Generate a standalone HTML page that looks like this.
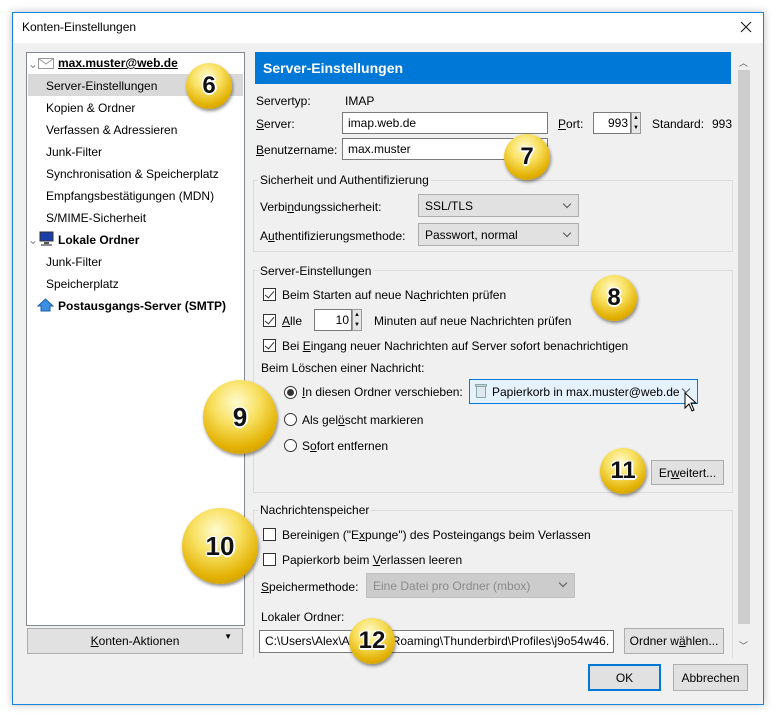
<!DOCTYPE html>
<html><head><meta charset="utf-8"><style>
*{box-sizing:border-box;margin:0;padding:0}
body{width:776px;height:716px;background:#fff;position:relative;overflow:hidden;font-family:"Liberation Sans",sans-serif;font-size:12px;color:#000}
.a{position:absolute;white-space:nowrap}
.win{position:absolute;left:12px;top:12px;width:752px;height:693px;border:1px solid #1883d7;background:#f0f0f0;box-shadow:0 0 8px rgba(0,0,0,.25)}
.inp{position:absolute;background:#fff;border:1px solid #7a7a7a;height:22px;padding:3px 5px}
.dd{position:absolute;background:#e1e1e1;border:1px solid #adadad;height:23px;padding:4px 6px}
.dd:after{content:"";position:absolute;right:8px;top:6px;width:5px;height:5px;border-right:1px solid #555;border-bottom:1px solid #555;transform:rotate(45deg)}
.btn{position:absolute;background:#e1e1e1;border:1px solid #adadad;height:25px;text-align:center;padding-top:5px}
.grp{position:absolute;border:1px solid #dcdcdc}
.cb{position:absolute;width:13px;height:13px;border:1px solid #333;background:#fff}
.cb.c:after{content:"";position:absolute;left:3px;top:0px;width:4px;height:8px;border-right:1.5px solid #333;border-bottom:1.5px solid #333;transform:rotate(40deg)}
.rb{position:absolute;width:13px;height:13px;border:1px solid #333;border-radius:50%;background:#fff}
.rb.c:after{content:"";position:absolute;left:2px;top:2px;width:7px;height:7px;border-radius:50%;background:#333}
.bd{position:absolute;border-radius:50%;background:radial-gradient(circle at 45% 30%,#fffbd0 0%,#f8e060 35%,#e2b000 70%,#b88a00 100%);box-shadow:1px 2px 3px rgba(0,0,0,.45);text-align:center;font-weight:bold;color:#111;font-family:"Liberation Sans",sans-serif;text-shadow:-1px -1px 0 #fff,1px -1px 0 #fff,-1px 1px 0 #fff,1px 1px 0 #fff,0 2px 0 #fff,2px 0 0 #fff}
u{text-decoration:underline}
</style></head><body>
<div class="win"></div>
<div class="a" style="left:13px;top:13px;width:750px;height:30px;background:#fff"></div>
<div class="a" style="left:22px;top:20px;font-size:12px">Konten-Einstellungen</div>
<svg class="a" style="left:740px;top:21px" width="12" height="12"><path d="M1 1L11 11M11 1L1 11" stroke="#222" stroke-width="1.2"/></svg>

<!-- left tree -->
<div class="a" style="left:26px;top:52px;width:219px;height:574px;background:#fff;border:1px solid #828790"></div>
<div class="a" style="left:28px;top:74px;width:215px;height:22px;background:#d9d9d9"></div>
<div class="a" style="left:28px;top:57px;color:#888">⌄</div>
<svg class="a" style="left:38px;top:58px" width="16" height="11"><rect x=".5" y=".5" width="15" height="10" fill="#fff" stroke="#999"/><path d="M.5 .5L8 6L15.5 .5" fill="none" stroke="#999"/></svg>
<div class="a" style="left:58px;top:56px;font-weight:bold;text-decoration:underline">max.muster@web.de</div>
<div class="a" style="left:46px;top:79px">Server-Einstellungen</div>
<div class="a" style="left:46px;top:101px">Kopien &amp; Ordner</div>
<div class="a" style="left:46px;top:123px">Verfassen &amp; Adressieren</div>
<div class="a" style="left:46px;top:145px">Junk-Filter</div>
<div class="a" style="left:46px;top:167px">Synchronisation &amp; Speicherplatz</div>
<div class="a" style="left:46px;top:189px">Empfangsbestätigungen (MDN)</div>
<div class="a" style="left:46px;top:211px">S/MIME-Sicherheit</div>
<div class="a" style="left:28px;top:233px;color:#888">⌄</div>
<svg class="a" style="left:39px;top:231px" width="15" height="15"><rect x="1" y="1" width="13" height="9" fill="#1a3fa8" stroke="#333"/><rect x="5" y="11" width="5" height="2" fill="#555"/><rect x="2" y="13" width="11" height="2" fill="#888"/></svg>
<div class="a" style="left:58px;top:233px;font-weight:bold">Lokale Ordner</div>
<div class="a" style="left:46px;top:255px">Junk-Filter</div>
<div class="a" style="left:46px;top:277px">Speicherplatz</div>
<svg class="a" style="left:37px;top:298px" width="17" height="14"><path d="M8.5 1L1 8H4V13H13V8H16Z" fill="#3a8fe0" stroke="#1b5fa8"/></svg>
<div class="a" style="left:58px;top:299px;font-weight:bold">Postausgangs-Server (SMTP)</div>
<div class="btn" style="left:27px;top:628px;width:216px;height:26px"><u>K</u>onten-Aktionen<span style="position:absolute;right:10px;top:3px;font-size:8px">▼</span></div>

<!-- right -->
<div class="a" style="left:255px;top:52px;width:476px;height:32px;background:#0078d7;color:#fff;font-weight:bold;font-size:14px;padding:8px 8px">Server-Einstellungen</div>
<div class="a" style="left:737px;top:55px;width:14px;height:596px;background:#f0f0f0"></div>
<div class="a" style="left:738px;top:70px;width:12px;height:554px;background:#cdcdcd"></div>
<div class="a" style="left:739px;top:56px;font-size:9px;color:#555">︿</div>
<div class="a" style="left:739px;top:639px;font-size:9px;color:#555">﹀</div>

<div class="a" style="left:256px;top:94px">Servertyp:</div>
<div class="a" style="left:345px;top:94px">IMAP</div>
<div class="a" style="left:256px;top:117px"><u>S</u>erver:</div>
<div class="inp" style="left:342px;top:112px;width:206px">imap.web.de</div>
<div class="a" style="left:558px;top:117px"><u>P</u>ort:</div>
<div class="inp" style="left:593px;top:112px;width:38px;text-align:right;padding-right:2px">993</div>
<div class="a" style="left:631px;top:112px;width:10px;height:22px;background:#e6e6e6;border:1px solid #999;font-size:6px;line-height:10px;text-align:center">▲<br>▼</div>
<div class="a" style="left:652px;top:117px">Standard:</div>
<div class="a" style="left:712px;top:117px">993</div>
<div class="a" style="left:256px;top:143px"><u>B</u>enutzername:</div>
<div class="inp" style="left:342px;top:138px;width:206px">max.muster</div>

<div class="grp" style="left:253px;top:180px;width:480px;height:72px"></div>
<div class="a" style="left:258px;top:173px;background:#f0f0f0;padding:0 2px">Sicherheit und Authentifizierung</div>
<div class="a" style="left:260px;top:200px">Verbi<u>n</u>dungssicherheit:</div>
<div class="dd" style="left:418px;top:194px;width:161px">SSL/TLS</div>
<div class="a" style="left:260px;top:229px">A<u>u</u>thentifizierungsmethode:</div>
<div class="dd" style="left:418px;top:223px;width:161px">Passwort, normal</div>

<div class="grp" style="left:253px;top:270px;width:480px;height:223px"></div>
<div class="a" style="left:258px;top:264px;background:#f0f0f0;padding:0 2px">Server-Einstellungen</div>
<div class="cb c" style="left:263px;top:288px"></div>
<div class="a" style="left:282px;top:288px">Beim Starten auf neue Na<u>c</u>hrichten prüfen</div>
<div class="cb c" style="left:263px;top:314px"></div>
<div class="a" style="left:282px;top:314px"><u>A</u>lle</div>
<div class="inp" style="left:314px;top:309px;width:38px;text-align:right;padding-right:2px">10</div>
<div class="a" style="left:352px;top:309px;width:10px;height:22px;background:#e6e6e6;border:1px solid #999;font-size:6px;line-height:10px;text-align:center">▲<br>▼</div>
<div class="a" style="left:374px;top:314px">Minuten auf neue Nachrichten prüfen</div>
<div class="cb c" style="left:263px;top:339px"></div>
<div class="a" style="left:282px;top:339px">Bei <u>E</u>ingang neuer Nachrichten auf Server sofort benachrichtigen</div>
<div class="a" style="left:261px;top:361px">Beim Löschen einer Nachricht:</div>
<div class="rb c" style="left:284px;top:386px"></div>
<div class="a" style="left:302px;top:385px"><u>I</u>n diesen Ordner verschieben:</div>
<div class="dd" style="left:469px;top:379px;width:229px;height:25px;background:#e5f1fb;border-color:#0078d7;padding-left:22px;padding-top:5px">Papierkorb in max.muster@web.de</div>
<svg class="a" style="left:475px;top:384px" width="12" height="14"><rect x="1.5" y="2.5" width="9" height="11" fill="#dfe8ee" stroke="#8aa"/><rect x=".5" y=".5" width="11" height="2" fill="#ccd" stroke="#8aa"/></svg>
<svg class="a" style="left:684px;top:392px" width="14" height="21"><path d="M1 1V16L5 12L8 19L10 18L7 11H12Z" fill="#fff" stroke="#000"/></svg>
<div class="rb" style="left:284px;top:413px"></div>
<div class="a" style="left:302px;top:413px">Als gel<u>ö</u>scht markieren</div>
<div class="rb" style="left:284px;top:439px"></div>
<div class="a" style="left:302px;top:439px">S<u>o</u>fort entfernen</div>
<div class="btn" style="left:651px;top:460px;width:73px">Er<u>w</u>eitert...</div>

<div class="grp" style="left:253px;top:510px;width:480px;height:150px;border-bottom:none"></div>
<div class="a" style="left:258px;top:503px;background:#f0f0f0;padding:0 2px">Nachrichtenspeicher</div>
<div class="cb" style="left:263px;top:528px"></div>
<div class="a" style="left:282px;top:528px">Bereinigen ("E<u>x</u>punge") des Posteingangs beim Verlassen</div>
<div class="cb" style="left:263px;top:553px"></div>
<div class="a" style="left:282px;top:553px">Papierkorb beim <u>V</u>erlassen leeren</div>
<div class="a" style="left:261px;top:580px"><u>S</u>peichermethode:</div>
<div class="dd" style="left:366px;top:573px;width:209px;height:25px;background:#ccc;border-color:#bfbfbf;color:#8a8a8a;padding-top:5px">Eine Datei pro Ordner (mbox)</div>
<div class="a" style="left:261px;top:610px">Lokaler Ordner:</div>
<div class="inp" style="left:259px;top:630px;width:355px;height:23px;overflow:hidden">C:\Users\Alex\AppData\Roaming\Thunderbird\Profiles\j9o54w46.</div>
<div class="btn" style="left:624px;top:628px;width:100px;height:26px">Ordner w<u>ä</u>hlen...</div>
<div class="a" style="left:13px;top:658px;width:724px;height:46px;background:#f0f0f0"></div>
<div class="btn" style="left:588px;top:664px;width:73px;height:27px;border:2px solid #0078d7;padding-top:5px">OK</div>
<div class="btn" style="left:673px;top:664px;width:75px;height:27px;padding-top:6px">Abbrechen</div>

<!-- badges -->
<div class="bd" style="left:186px;top:63px;width:46px;height:46px;font-size:24px;line-height:46px">6</div>
<div class="bd" style="left:504px;top:134px;width:46px;height:46px;font-size:24px;line-height:46px">7</div>
<div class="bd" style="left:591px;top:275px;width:46px;height:46px;font-size:24px;line-height:46px">8</div>
<div class="bd" style="left:203px;top:380px;width:74px;height:74px;font-size:26px;line-height:74px">9</div>
<div class="bd" style="left:182px;top:508px;width:76px;height:76px;font-size:26px;line-height:76px">10</div>
<div class="bd" style="left:600px;top:448px;width:46px;height:46px;font-size:24px;line-height:46px">11</div>
<div class="bd" style="left:349px;top:618px;width:46px;height:46px;font-size:24px;line-height:46px">12</div>
</body></html>
